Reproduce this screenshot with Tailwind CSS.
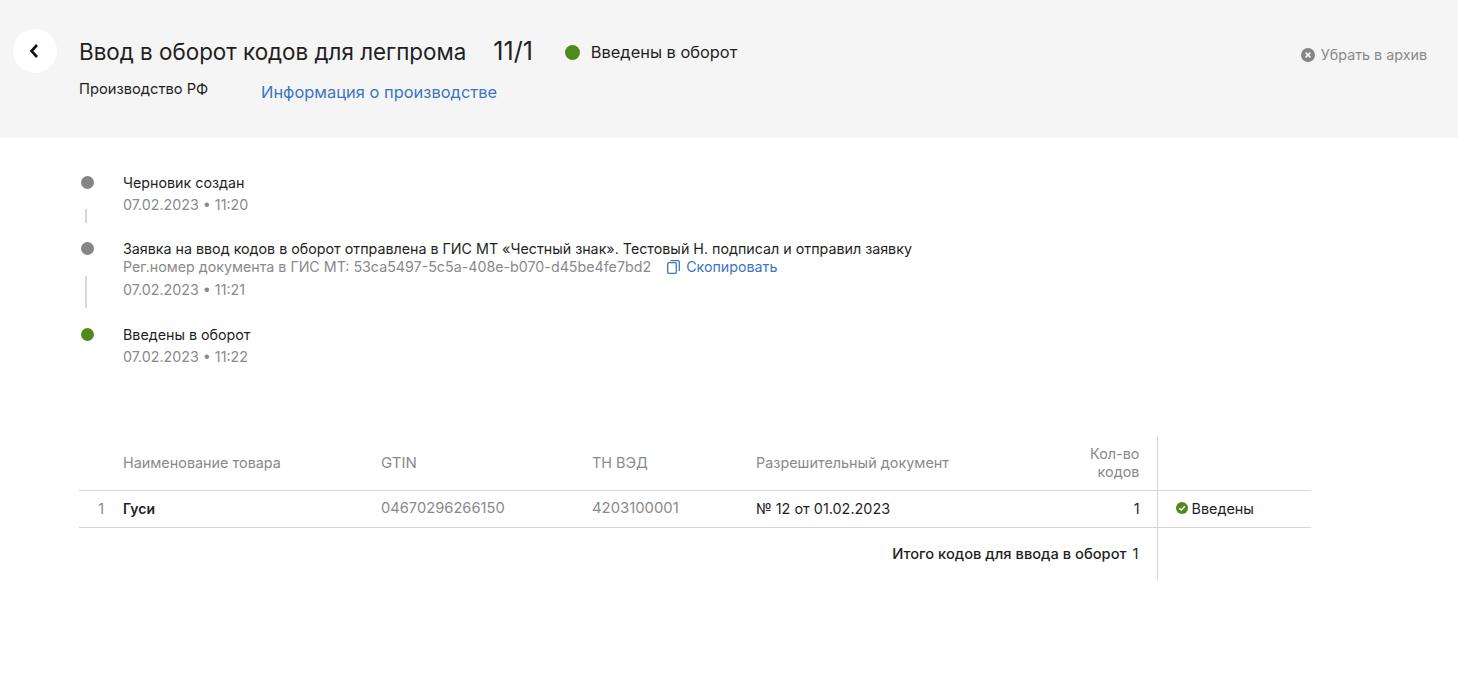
<!DOCTYPE html>
<html lang="ru">
<head>
  <meta charset="UTF-8">
  <title>Ввод в оборот кодов для легпрома</title>
  <script src="https://cdn.jsdelivr.net/npm/@tailwindcss/browser@4"></script>
</head>
<body class="bg-white font-['Inter',sans-serif] text-[#1f1f1f]">
  <!-- Шапка -->
  <header class="bg-[#f5f5f5] h-[138px] flex pl-[13px] pr-[31px] pt-[29px]">
    <button class="w-[44px] h-[44px] rounded-full bg-white flex items-center justify-center shrink-0 mr-[22px]">
      <svg width="12" height="16" viewBox="0 0 12 16" fill="none" class="-ml-[2px] -mt-[1px]"><path d="M9 2L3.5 8L9 14" stroke="#111" stroke-width="2.6"/></svg>
    </button>
    <div class="flex-1">
      <div class="flex items-center h-[48px] -mt-[1px]">
        <h1 class="text-[22.4px] leading-[48px] font-normal">Ввод в оборот кодов для легпрома</h1>
        <span class="text-[25px] ml-[27px]">11/1</span>
        <span class="w-[15px] h-[15px] rounded-full bg-[#4f8a1c] ml-[32px] mt-[1px]"></span>
        <span class="text-[16.4px] ml-[11px] mt-[1px]">Введены в оборот</span>
      </div>
      <div class="flex mt-[3px]">
        <span class="text-[14.7px] w-[182px] -mt-[1px]">Производство РФ</span>
        <a class="text-[16.45px] text-[#3a75c4] mt-[1px]">Информация о производстве</a>
      </div>
    </div>
    <div class="flex items-center h-[52px] text-[14.3px] text-[#8a8a8a]">
      <svg width="14" height="14" viewBox="0 0 14 14" class="mr-[6px]"><circle cx="7" cy="7" r="7" fill="#858585"/><path d="M4.6 4.6L9.4 9.4M9.4 4.6L4.6 9.4" stroke="#f5f5f5" stroke-width="1.6"/></svg>
      Убрать в архив
    </div>
  </header>

  <!-- Хронология -->
  <section class="pl-[81px] pt-[35px] text-[14.27px]">
    <div class="flex h-[66px]">
      <div class="w-[13px] mr-[29px] flex flex-col">
        <span class="w-[13px] h-[13px] rounded-full bg-[#858585] mt-[3px]"></span>
        <span class="w-[2px] h-[14px] bg-[#d6d6d6] mt-[20px] ml-[4px]"></span>
      </div>
      <div>
        <p class="leading-[20px]">Черновик создан</p>
        <p class="leading-[20px] mt-[2px] text-[#8a8a8a]">07.02.2023 • 11:20</p>
      </div>
    </div>
    <div class="flex h-[86px]">
      <div class="w-[13px] mr-[29px] flex flex-col">
        <span class="w-[13px] h-[13px] rounded-full bg-[#858585] mt-[3px]"></span>
        <span class="w-[2px] h-[32px] bg-[#d6d6d6] mt-[21px] ml-[4px]"></span>
      </div>
      <div>
        <p class="leading-[20px]">Заявка на ввод кодов в оборот отправлена в ГИС МТ «Честный знак». Тестовый Н. подписал и отправил заявку</p>
        <p class="leading-[18px] -mt-[1px] flex items-center text-[#8a8a8a] text-[14.25px]">Рег.номер документа в ГИС МТ: 53ca5497-5c5a-408e-b070-d45be4fe7bd2
          <svg width="13" height="14" viewBox="0 0 13 14" fill="none" class="ml-[16px] mr-[6px]"><rect x="0.7" y="2.7" width="8.6" height="10.6" rx="1" stroke="#3a75c4" stroke-width="1.3"/><path d="M3.5 0.7H11.3a1 1 0 0 1 1 1V11" stroke="#3a75c4" stroke-width="1.3"/></svg>
          <a class="text-[#3a75c4]">Скопировать</a>
        </p>
        <p class="leading-[20px] mt-[4px] text-[#8a8a8a]">07.02.2023 • 11:21</p>
      </div>
    </div>
    <div class="flex">
      <div class="w-[13px] mr-[29px] flex flex-col">
        <span class="w-[13px] h-[13px] rounded-full bg-[#4f8a1c] mt-[3px]"></span>
      </div>
      <div>
        <p class="leading-[20px]">Введены в оборот</p>
        <p class="leading-[20px] mt-[2px] text-[#8a8a8a]">07.02.2023 • 11:22</p>
      </div>
    </div>
  </section>

  <!-- Таблица -->
  <table class="table-fixed w-[1232px] ml-[79px] mt-[70px] text-[14.4px] border-collapse">
    <colgroup>
      <col class="w-[44px]"><col class="w-[258px]"><col class="w-[211px]"><col class="w-[164px]"><col class="w-[401px]"><col class="w-[154px]">
    </colgroup>
    <thead>
      <tr class="h-[53px] border-b border-[#d6d6d6] text-[#8a8a8a] text-left">
        <th></th>
        <th class="font-normal">Наименование товара</th>
        <th class="font-normal text-[15px]">GTIN</th>
        <th class="font-normal">ТН ВЭД</th>
        <th class="font-normal relative">
          Разрешительный документ
          <span class="absolute right-[17px] top-1/2 -translate-y-1/2 w-[60px] text-right leading-[18px]">Кол-во кодов</span>
        </th>
        <th class="border-l border-[#d6d6d6]"></th>
      </tr>
    </thead>
    <tbody>
      <tr class="h-[37px] border-b border-[#d6d6d6]">
        <td class="text-[#8a8a8a] text-right pr-[19px]">1</td>
        <td class="font-semibold text-[14px]">Гуси</td>
        <td class="text-[#8a8a8a] text-[14.7px]">04670296266150</td>
        <td class="text-[#8a8a8a] text-[14.85px]">4203100001</td>
        <td class="pr-[17px]"><div class="flex justify-between"><span>№ 12 от 01.02.2023</span><span>1</span></div></td>
        <td class="border-l border-[#d6d6d6] pl-[18px]">
          <div class="flex items-center">
            <svg width="12" height="12" viewBox="0 0 12 12" class="mr-[4px]"><circle cx="6" cy="6" r="6" fill="#4f8a1c"/><path d="M3.2 6.2L5.2 8L8.8 4.4" stroke="#fff" stroke-width="1.5" fill="none"/></svg>
            Введены
          </div>
        </td>
      </tr>
      <tr class="h-[54px]">
        <td colspan="5" class="text-right pr-[18px] align-top pt-[15px] font-medium text-[14.7px]">Итого кодов для ввода в оборот <span class="font-normal ml-[2px]">1</span></td>
        <td class="border-l border-[#d6d6d6]"></td>
      </tr>
    </tbody>
  </table>
</body>
</html>
